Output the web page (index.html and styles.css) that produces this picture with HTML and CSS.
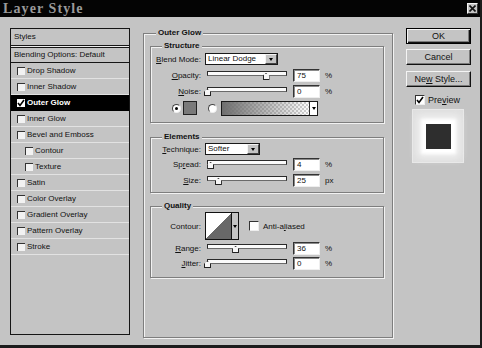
FILE: index.html
```html
<!DOCTYPE html>
<html lang="en">

<head>
    <meta charset="UTF-8">
    <title>Layer Style</title>
    <link rel="stylesheet" href="styles.css">
</head>

<body>
<div class="dialog">
  <div class="titleBar">
    <span class="title">Layer Style</span>
    <span class="closeBtn">
      <svg width="7" height="7" viewBox="0 0 7 7"><path d="M0.5 0.5L6.5 6.5M6.5 0.5L0.5 6.5" stroke="#111" stroke-width="1.6"/></svg>
    </span>
  </div>

  <div class="content">
    <!-- left list of effects -->
    <div class="styleList">
      <div class="listHead">Styles</div>
      <div class="listBlend">Blending Options: Default</div>
      <div class="fxRow"><span class="chk"></span>Drop Shadow</div>
      <div class="fxRow"><span class="chk"></span>Inner Shadow</div>
      <div class="fxRow selected"><span class="chk on"><svg width="8" height="8" viewBox="0 0 8 8"><path d="M1 4L3 6.5L7 1" stroke="#000" stroke-width="1.6" fill="none"/></svg></span>Outer Glow</div>
      <div class="fxRow"><span class="chk"></span>Inner Glow</div>
      <div class="fxRow"><span class="chk"></span>Bevel and Emboss</div>
      <div class="fxRow sub"><span class="chk"></span>Contour</div>
      <div class="fxRow sub"><span class="chk"></span>Texture</div>
      <div class="fxRow"><span class="chk"></span>Satin</div>
      <div class="fxRow"><span class="chk"></span>Color Overlay</div>
      <div class="fxRow"><span class="chk"></span>Gradient Overlay</div>
      <div class="fxRow"><span class="chk"></span>Pattern Overlay</div>
      <div class="fxRow"><span class="chk"></span>Stroke</div>
    </div>

    <!-- outer glow settings -->
    <fieldset class="panel">
      <legend>Outer Glow</legend>

      <fieldset class="group structure">
        <legend>Structure</legend>
        <div class="row">
          <label class="lbl"><u>B</u>lend Mode:</label>
          <div class="select blendSel">Linear Dodge<span class="drop"></span></div>
        </div>
        <div class="row">
          <label class="lbl"><u>O</u>pacity:</label>
          <div class="slider"><span class="thumb" style="left:75%"></span></div>
          <div class="num">75</div>
          <span class="unit">%</span>
        </div>
        <div class="row">
          <label class="lbl"><u>N</u>oise:</label>
          <div class="slider"><span class="thumb" style="left:0%"></span></div>
          <div class="num">0</div>
          <span class="unit">%</span>
        </div>
        <div class="row colorRow">
          <span class="radio on"></span>
          <span class="swatch"></span>
          <span class="radio second"></span>
          <div class="gradient"><span class="gradFill"></span><span class="gradDrop"></span></div>
        </div>
      </fieldset>

      <fieldset class="group elements">
        <legend>Elements</legend>
        <div class="row short">
          <label class="lbl"><u>T</u>echnique:</label>
          <div class="select techSel">Softer<span class="drop"></span></div>
        </div>
        <div class="row">
          <label class="lbl">Sp<u>r</u>ead:</label>
          <div class="slider"><span class="thumb" style="left:4%"></span></div>
          <div class="num">4</div>
          <span class="unit">%</span>
        </div>
        <div class="row">
          <label class="lbl"><u>S</u>ize:</label>
          <div class="slider"><span class="thumb" style="left:14%"></span></div>
          <div class="num">25</div>
          <span class="unit">px</span>
        </div>
      </fieldset>

      <fieldset class="group quality">
        <legend>Quality</legend>
        <div class="row contourRow">
          <label class="lbl">Contour:</label>
          <div class="contourPick"><span class="curve"></span><span class="pickDrop"></span></div>
          <span class="box"></span>
          <span class="boxText">Anti-a<u>l</u>iased</span>
        </div>
        <div class="row short">
          <label class="lbl"><u>R</u>ange:</label>
          <div class="slider"><span class="thumb" style="left:36%"></span></div>
          <div class="num">36</div>
          <span class="unit">%</span>
        </div>
        <div class="row">
          <label class="lbl"><u>J</u>itter:</label>
          <div class="slider"><span class="thumb" style="left:0%"></span></div>
          <div class="num">0</div>
          <span class="unit">%</span>
        </div>
      </fieldset>
    </fieldset>

    <!-- buttons and preview -->
    <div class="buttons">
      <div class="btn default">OK</div>
      <div class="btn cancelBtn">Cancel</div>
      <div class="btn newBtn">Ne<u>w</u> Style...</div>
      <div class="previewRow">
        <span class="box on"><svg width="8" height="8" viewBox="0 0 8 8"><path d="M1 4L3 6.5L7 1" stroke="#000" stroke-width="1.6" fill="none"/></svg></span>
        <span>Pre<u>v</u>iew</span>
      </div>
      <div class="previewBox"><span class="previewSquare"></span></div>
    </div>
  </div>
</div>
</body>
</html>
```

FILE: styles.css
```css
* {
    box-sizing: border-box;
}

body {
    margin: 0;
    background: #c4c4c4;
    font-family: "Liberation Sans", Arial, sans-serif;
    font-size: 8px;
    color: #111;
}

.dialog {
    width: 482px;
    height: 348px;
    background: #c4c4c4;
    border-right: 2px solid #1c1c1c;
    border-bottom: 3px solid #1c1c1c;
}

.titleBar {
    height: 17px;
    background: #040404;
    display: flex;
    align-items: center;
    justify-content: space-between;
    padding: 0 2px 0 3px;
}

.title {
    font-family: "Liberation Serif", serif;
    font-weight: bold;
    font-size: 14px;
    letter-spacing: 1.1px;
    color: #9a9a9a;
    line-height: 17px;
}

.closeBtn {
    width: 11px;
    height: 11px;
    background: #c4c4c4;
    border: 1px solid;
    border-color: #f4f4f4 #333 #333 #f4f4f4;
    display: flex;
    align-items: center;
    justify-content: center;
}

.content {
    display: flex;
    align-items: flex-start;
    padding: 11px 0 0 10px;
}

/* left list */
.styleList {
    width: 120px;
    height: 307px;
    border: 1px solid #161616;
}

.listHead {
    height: 17px;
    line-height: 16px;
    padding-left: 3px;
    border-bottom: 1px solid #161616;
}

.listBlend {
    height: 16px;
    line-height: 14px;
    margin-top: 1px;
    padding-left: 3px;
    border-top: 1px solid #161616;
    border-bottom: 1px solid #161616;
    box-shadow: 0 -1px 0 #ececec;
}

.fxRow {
    height: 16px;
    display: flex;
    align-items: center;
    padding-left: 6px;
    border-bottom: 1px solid #e2e2e2;
}

.fxRow.sub {
    padding-left: 14px;
}

.fxRow.selected {
    background: #000;
    color: #fff;
    font-weight: bold;
    border-bottom-color: #000;
}

.chk {
    width: 8px;
    height: 8px;
    margin-right: 2px;
    background: #f2f2f2;
    border-top: 1px solid #333;
    border-left: 1px solid #333;
    display: flex;
}

.chk.on {
    background: #fff;
    border: none;
}

/* outer glow panel */
fieldset {
    margin: 0;
    min-width: 0;
    border: 1px solid #7e7e7e;
    box-shadow: inset 1px 1px 0 #f2f2f2, 1px 1px 0 #f2f2f2;
}

legend {
    padding: 0 2px;
    line-height: 10px;
    font-weight: bold;
    background: #c4c4c4;
}

.panel {
    margin-left: 13px;
    width: 250px;
    height: 310px;
    padding: 0 7px 0 6px;
}

.panel > legend {
    margin-left: 6px;
}

.group {
    width: 234px;
    padding: 0;
}

.group > legend {
    margin-left: 11px;
}

.structure {
    margin-top: 3px;
    padding-bottom: 5px;
}

.elements {
    margin-top: 9px;
    padding-bottom: 4px;
}

.quality {
    margin-top: 8px;
    padding-bottom: 6px;
}

.row {
    display: flex;
    align-items: center;
    height: 16px;
}

.row.short {
    height: 14px;
}

.lbl {
    width: 50px;
    margin-right: 4px;
    text-align: right;
}

.select {
    height: 12px;
    background: #fff;
    border: 1px solid #1a1a1a;
    padding-left: 2px;
    line-height: 10px;
    display: flex;
    justify-content: space-between;
}

.blendSel {
    width: 73px;
}

.techSel {
    width: 55px;
}

.drop {
    width: 12px;
    height: 10px;
    background: #c4c4c4;
    border: 1px solid;
    border-color: #f4f4f4 #444 #444 #f4f4f4;
    position: relative;
}

.drop::after,
.gradDrop::after,
.pickDrop::after {
    content: "";
    position: absolute;
    left: 50%;
    top: 50%;
    margin: -1px 0 0 -2px;
    border-left: 2px solid transparent;
    border-right: 2px solid transparent;
    border-top: 3px solid #000;
}

.slider {
    position: relative;
    width: 80px;
    height: 5px;
    margin: 0 6px 3px 2px;
    background: #fafafa;
    border: 1px solid #2a2a2a;
    border-bottom-color: #6a6a6a;
}

.thumb {
    position: absolute;
    top: 1px;
    width: 7px;
    height: 7px;
    margin-left: -4px;
    background: #f6f6f6;
    border: 1px solid #222;
    clip-path: polygon(50% 0, 100% 40%, 100% 100%, 0 100%, 0 40%);
}

.num {
    width: 27px;
    height: 13px;
    padding-left: 3px;
    line-height: 11px;
    background: #fff;
    border: 1px solid;
    border-color: #333 #eee #eee #333;
    box-shadow: inset 1px 1px 0 #8a8a8a;
}

.unit {
    margin-left: 5px;
}

.colorRow {
    height: 18px;
    padding-left: 21px;
}

.radio {
    width: 9px;
    height: 9px;
    border-radius: 50%;
    background: #fff;
    border: 1px solid;
    border-color: #444 #eee #eee #444;
    display: flex;
    align-items: center;
    justify-content: center;
}

.radio.on::after {
    content: "";
    width: 3px;
    height: 3px;
    border-radius: 50%;
    background: #000;
}

.radio.second {
    margin-left: 11px;
}

.swatch {
    width: 14px;
    height: 14px;
    margin-left: 2px;
    background: #7a7a7a;
    border: 1px solid #222;
}

.gradient {
    width: 97px;
    height: 15px;
    margin-left: 4px;
    border: 1px solid #1a1a1a;
    display: flex;
}

.gradFill {
    flex: 1;
    background-image:
        linear-gradient(to right, #6e6e6e, rgba(110, 110, 110, 0)),
        linear-gradient(45deg, #d0d0d0 25%, transparent 25%, transparent 75%, #d0d0d0 75%),
        linear-gradient(45deg, #d0d0d0 25%, transparent 25%, transparent 75%, #d0d0d0 75%);
    background-size: 100% 100%, 4px 4px, 4px 4px;
    background-position: 0 0, 0 0, 2px 2px;
    background-color: #fff;
}

.gradDrop {
    width: 8px;
    background: #fff;
    border-left: 1px solid #333;
    position: relative;
}

.contourRow {
    height: 30px;
}

.contourPick {
    width: 34px;
    height: 28px;
    border: 1px solid #111;
    display: flex;
}

.curve {
    width: 26px;
    background: linear-gradient(to bottom right, #fff 50%, #686868 50%);
    border-right: 1px solid #111;
}

.pickDrop {
    flex: 1;
    background: #c4c4c4;
    position: relative;
}

.box {
    width: 10px;
    height: 10px;
    background: #fff;
    border: 1px solid;
    border-color: #333 #eee #eee #333;
    display: flex;
    align-items: center;
    justify-content: center;
}

.contourRow .box {
    margin-left: 10px;
}

.boxText {
    margin-left: 4px;
}

/* right buttons */
.buttons {
    margin-left: 13px;
    width: 65px;
    display: flex;
    flex-direction: column;
    font-size: 9px;
}

.btn {
    height: 16px;
    line-height: 14px;
    text-align: center;
    background: #c4c4c4;
    border: 1px solid;
    border-color: #f4f4f4 #111 #111 #f4f4f4;
    box-shadow: inset -1px -1px 0 #7a7a7a;
}

.btn.default {
    border: 1px solid #000;
    box-shadow: inset 1px 1px 0 #f4f4f4, inset -1px -1px 0 #111, inset -2px -2px 0 #7a7a7a;
}

.cancelBtn {
    margin-top: 5px;
}

.newBtn {
    margin-top: 6px;
}

.previewRow {
    margin-top: 7px;
    height: 11px;
    padding-left: 9px;
    display: flex;
    align-items: center;
    gap: 3px;
}

.previewBox {
    margin: 4px 0 0 6px;
    width: 52px;
    height: 54px;
    background: #dedede;
    border: 1px solid #e8e8e8;
    display: flex;
    align-items: center;
    justify-content: center;
}

.previewSquare {
    width: 25px;
    height: 25px;
    background: #2e2e2e;
    box-shadow: 0 0 3px 5px #fff, 0 0 8px 9px #f0f0f0;
}
```
